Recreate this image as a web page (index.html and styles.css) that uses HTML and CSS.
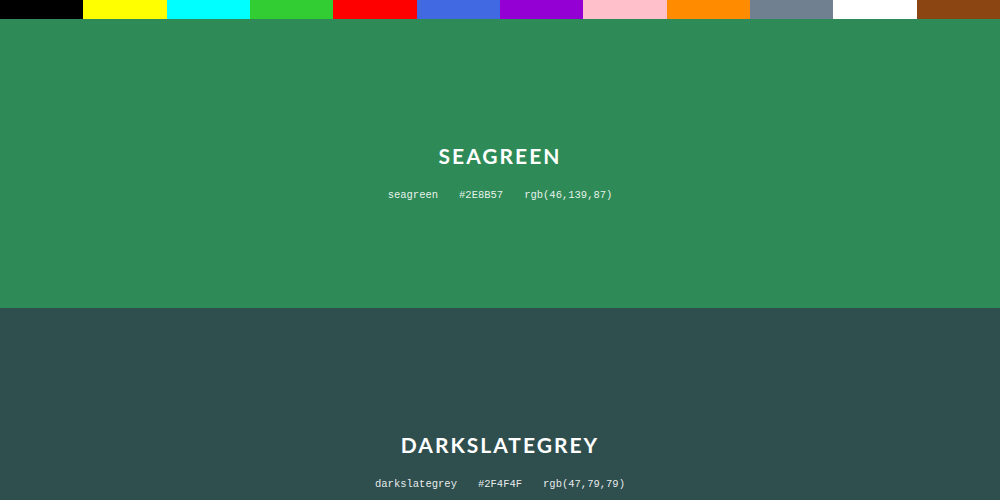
FILE: index.html
```html
<!DOCTYPE html>
<html lang="en">
<head>
    <meta charset="UTF-8">
    <meta name="viewport" content="width=device-width, initial-scale=1.0">
    <title>Colours</title>
    <link rel="stylesheet" href="styles.css">
</head>
<body>
    <nav class="swatches">
        <div class="swatch" style="background: #000000"></div>
        <div class="swatch" style="background: #FFFF00"></div>
        <div class="swatch" style="background: #00FFFF"></div>
        <div class="swatch" style="background: #32CD32"></div>
        <div class="swatch" style="background: #FF0000"></div>
        <div class="swatch" style="background: #4169E1"></div>
        <div class="swatch" style="background: #9400D3"></div>
        <div class="swatch" style="background: #FFC0CB"></div>
        <div class="swatch" style="background: #FF8C00"></div>
        <div class="swatch" style="background: #708090"></div>
        <div class="swatch" style="background: #FFFFFF"></div>
        <div class="swatch" style="background: #8B4513"></div>
    </nav>
    <section class="colour" style="background: #2E8B57">
        <h1>SEAGREEN</h1>
        <div class="codes">
            <span>seagreen</span>
            <span>#2E8B57</span>
            <span>rgb(46,139,87)</span>
        </div>
    </section>
    <section class="colour" style="background: #2F4F4F">
        <h1>DARKSLATEGREY</h1>
        <div class="codes">
            <span>darkslategrey</span>
            <span>#2F4F4F</span>
            <span>rgb(47,79,79)</span>
        </div>
    </section>
</body>
</html>
```

FILE: styles.css
```css
* {
    margin: 0;
    padding: 0;
    box-sizing: border-box;
}
body {
    font-family: 'Lato', sans-serif;
    color: white;
    overflow: hidden;
}
.swatches {
    display: flex;
    height: 19px;
}
.swatch {
    flex: 1;
}
.colour {
    height: 289px;
    padding-top: 126px;
    text-align: center;
}
h1 {
    font-size: 21px;
    font-weight: 700;
    letter-spacing: 2px;
    line-height: 1;
}
.codes {
    display: flex;
    justify-content: center;
    gap: 21px;
    margin-top: 23px;
    font-family: 'Liberation Mono', monospace;
    font-size: 10.5px;
    line-height: 12px;
    color: rgba(255, 255, 255, 0.9);
}
```
